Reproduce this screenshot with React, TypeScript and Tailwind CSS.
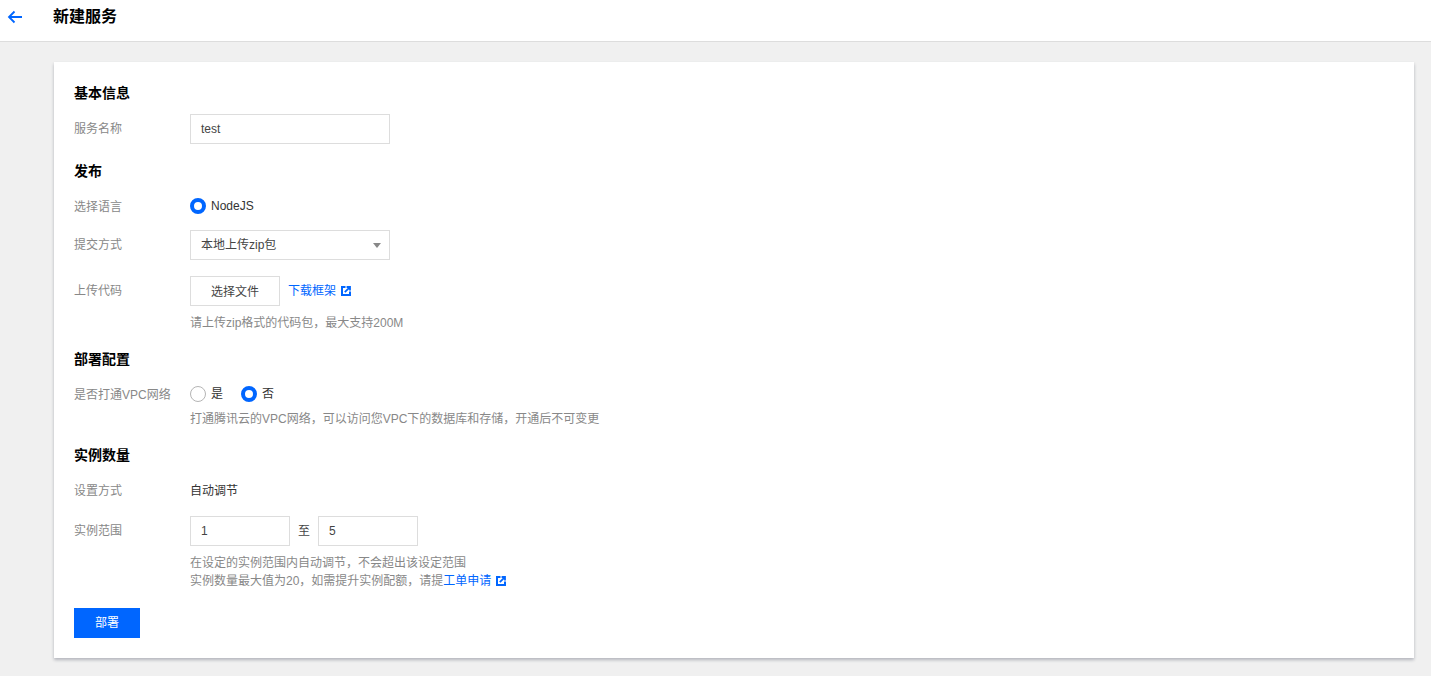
const font = { fontFamily: '"Liberation Sans", "Noto Sans CJK SC", sans-serif' };

function Ext() {
  return (
    <svg width="10" height="10" viewBox="0 0 10 10" className="block shrink-0">
      <path d="M4.5 1H1V9H9V5.5" fill="none" stroke="#0066ff" strokeWidth="2" />
      <path d="M3.8 6.2L8.4 1.6M5.6 1H9V4.4" fill="none" stroke="#0066ff" strokeWidth="1.8" />
    </svg>
  );
}

function Radio({ on, className = "" }: { on?: boolean; className?: string }) {
  return on ? (
    <span className={"block w-4 h-4 rounded-full border-[4px] border-[#0066ff] bg-white shrink-0 " + className} />
  ) : (
    <span className={"block w-4 h-4 rounded-full border border-[#b5b5b5] bg-white shrink-0 " + className} />
  );
}

function Heading({ children, className }: { children: string; className: string }) {
  return <h2 className={"text-[14px] leading-[20px] font-bold text-black " + className}>{children}</h2>;
}

function Label({ children, className = "" }: { children: string; className?: string }) {
  return <div className={"w-[116px] shrink-0 text-[12px] leading-[18px] text-[#888] " + className}>{children}</div>;
}

function Box({ children, className }: { children: React.ReactNode; className: string }) {
  return (
    <div className={"h-[30px] border border-[#ddd] bg-white flex items-center text-[12px] text-[#444] " + className}>
      {children}
    </div>
  );
}

export default function App() {
  return (
    <div style={font} className="h-[676px] bg-[#f0f0f0] overflow-hidden text-[12px]">
      <header className="h-[42px] bg-white border-b border-[#ddd] flex items-center">
        <svg width="16" height="14" viewBox="0 0 16 14" className="ml-[7px] mt-[-7px]">
          <path d="M15 7H2M7.5 1.5L2 7l5.5 5.5" fill="none" stroke="#0066ff" strokeWidth="1.8" />
        </svg>
        <h1 className="ml-[30px] mt-[-7px] text-[16px] leading-[20px] font-bold text-black">新建服务</h1>
      </header>
      <main className="ml-[54px] mr-[17px] mt-[20px] h-[596px] bg-white shadow-[0_2px_3px_0_rgba(54,58,80,0.32)] px-5 pt-[21px]">
        <Heading className="h-5">基本信息</Heading>
        <div className="flex items-center mt-[11px]">
          <Label>服务名称</Label>
          <Box className="w-[200px] pl-[10px]">test</Box>
        </div>
        <Heading className="mt-[17px]">发布</Heading>
        <div className="flex items-center mt-[15px] h-[20px]">
          <Label className="pt-[1px]">选择语言</Label>
          <Radio on />
          <span className="ml-[5px] text-[#333]">NodeJS</span>
        </div>
        <div className="flex items-center mt-[14px]">
          <Label>提交方式</Label>
          <Box className="w-[200px] pl-[10px] pr-[8px] justify-between">
            <span>本地上传zip包</span>
            <span className="w-0 h-0 border-x-[4px] border-x-transparent border-t-[5px] border-t-[#888]" />
          </Box>
        </div>
        <div className="flex mt-[16px]">
          <Label className="pt-[6px]">上传代码</Label>
          <div>
            <div className="flex items-center">
              <Box className="w-[90px] justify-center pt-[1px]">选择文件</Box>
              <a className="ml-[8px] text-[#0066ff]">下载框架</a>
              <span className="ml-[5px] mt-[-1px]"><Ext /></span>
            </div>
            <p className="mt-[8px] leading-[18px] text-[#888]">请上传zip格式的代码包，最大支持200M</p>
          </div>
        </div>
        <Heading className="mt-[17px]">部署配置</Heading>
        <div className="flex mt-[15px]">
          <Label className="pt-[2px]">是否打通VPC网络</Label>
          <div>
            <div className="flex items-center h-[20px]">
              <Radio />
              <span className="ml-[5px] text-[#333]">是</span>
              <Radio on className="ml-[18px]" />
              <span className="ml-[5px] text-[#333]">否</span>
            </div>
            <p className="mt-[6px] leading-[18px] text-[#888]">打通腾讯云的VPC网络，可以访问您VPC下的数据库和存储，开通后不可变更</p>
          </div>
        </div>
        <Heading className="mt-[17px]">实例数量</Heading>
        <div className="flex items-center mt-[17px] h-[18px]">
          <Label>设置方式</Label>
          <span className="text-[#333]">自动调节</span>
        </div>
        <div className="flex mt-[16px]">
          <Label className="pt-[6px]">实例范围</Label>
          <div>
            <div className="flex items-center">
              <Box className="w-[100px] pl-[10px]">1</Box>
              <span className="w-[28px] text-center text-[#444]">至</span>
              <Box className="w-[100px] pl-[10px]">5</Box>
            </div>
            <div className="mt-[8px] leading-[18px] text-[#888]">
              <p>在设定的实例范围内自动调节，不会超出该设定范围</p>
              <p className="flex items-center">
                实例数量最大值为20，如需提升实例配额，请提<a className="text-[#0066ff]">工单申请</a>
                <span className="ml-[5px]"><Ext /></span>
              </p>
            </div>
          </div>
        </div>
        <button className="mt-[18px] w-[66px] h-[30px] bg-[#0066ff] text-white text-[12px] block">部署</button>
      </main>
    </div>
  );
}
